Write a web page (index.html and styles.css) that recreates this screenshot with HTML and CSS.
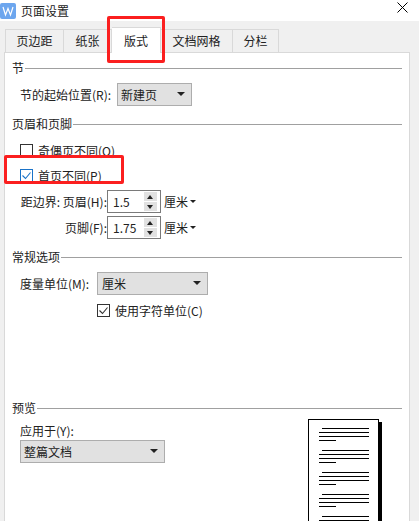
FILE: index.html
```html
<!DOCTYPE html>
<html>
<head>
<meta charset="UTF-8">
<title>页面设置</title>
<link rel="stylesheet" href="styles.css">
</head>
<body>
	<div class="titlebar">
		<svg class="app-icon" width="16" height="16" viewBox="0 0 16 16">
			<rect width="16" height="16" rx="2" fill="#6da6ee"/>
			<path d="M3 4l2.5 8L8 5.5 10.5 12 13 4" fill="none" stroke="#fff" stroke-width="1.2"/>
		</svg>
		<span class="title-text">页面设置</span>
		<svg class="close-icon" width="11" height="11" viewBox="0 0 11 11">
			<path d="M0.5 0.5l10 10M10.5 0.5l-10 10" stroke="#000" stroke-width="1" fill="none"/>
		</svg>
	</div>
	<div class="dialog">
		<div class="tabs">
			<div class="tab tab-margin">页边距</div>
			<div class="tab tab-paper">纸张</div>
			<div class="tab tab-active">版式</div>
			<div class="tab tab-grid">文档网格</div>
			<div class="tab tab-cols">分栏</div>
		</div>
		<div class="panel">
			<div class="group-head head-first"><span>节</span><i></i></div>
			<div class="row row-section">
				<label class="label">节的起始位置(R):</label>
				<div class="select select-section">新建页<b class="arrow"></b></div>
			</div>

			<div class="group-head head-header"><span>页眉和页脚</span><i></i></div>
			<div class="check-row check-odd"><span class="check"></span>奇偶页不同(O)</div>
			<div class="check-row check-first"><span class="check check-blue">
				<svg width="13" height="13" viewBox="0 0 13 13"><path d="M2.5 6.5l3 3 5-6" fill="none" stroke="#1a73c8" stroke-width="1.1"/></svg>
			</span>首页不同(P)</div>
			<div class="row row-spin">
				<label class="label label-spin">距边界: 页眉(H):</label>
				<div class="spin"><span>1.5</span><div class="spin-btns"><b class="up"></b><b class="down"></b></div></div>
				<span class="unit">厘米<b class="unit-arrow"></b></span>
			</div>
			<div class="row row-spin row-spin2">
				<label class="label label-spin">页脚(F):</label>
				<div class="spin"><span>1.75</span><div class="spin-btns"><b class="up"></b><b class="down"></b></div></div>
				<span class="unit">厘米<b class="unit-arrow"></b></span>
			</div>

			<div class="group-head head-general"><span>常规选项</span><i></i></div>
			<div class="row row-measure">
				<label class="label">度量单位(M):</label>
				<div class="select select-measure">厘米<b class="arrow"></b></div>
			</div>
			<div class="check-row check-char"><span class="check">
				<svg width="13" height="13" viewBox="0 0 13 13"><path d="M2.5 6.5l3 3 5-6" fill="none" stroke="#333" stroke-width="1.1"/></svg>
			</span>使用字符单位(C)</div>

			<div class="group-head head-preview"><span>预览</span><i></i></div>
			<div class="preview">
				<div class="apply">
					<label class="label apply-label">应用于(Y):</label>
					<div class="select select-apply">整篇文档<b class="arrow"></b></div>
				</div>
				<div class="page">
					<p class="para"><i></i><i></i><i></i><i></i></p>
					<p class="para"><i></i><i></i><i></i><i></i></p>
					<p class="para"><i></i><i></i><i></i><i></i></p>
					<p class="para"><i></i><i></i><i></i><i></i></p>
					<p class="para"><i></i><i></i></p>
				</div>
			</div>
		</div>
	</div>
	<div class="mark mark-tab"></div>
	<div class="mark mark-check"></div>
</body>
</html>
```

FILE: styles.css
```css
html, body {
	margin: 0;
	padding: 0;
	height: 100%;
	overflow: hidden;
}

body {
	position: relative;
	font-family: "Noto Sans CJK SC", "Liberation Sans", sans-serif;
	font-size: 12px;
	color: #222;
	background-color: #f0f0f0;
}

.titlebar {
	display: flex;
	align-items: center;
	height: 21px;
	background-color: #fff;
}

.app-icon {
	margin-left: 0;
}

.title-text {
	margin-left: 5px;
	font-size: 12px;
}

.close-icon {
	margin-left: auto;
	margin-right: 11px;
	margin-bottom: 6px;
}

.dialog {
	padding: 7px 9px 0 4px;
}

.tabs {
	display: flex;
	height: 24px;
	align-items: flex-end;
	padding-left: 1px;
}

.tab {
	box-sizing: border-box;
	height: 23px;
	line-height: 22px;
	text-align: center;
	border: 1px solid #d9d9d9;
	border-bottom: none;
	border-left: none;
	background-color: #f0f0f0;
}

.tab-margin {
	width: 59px;
	border-left: 1px solid #d9d9d9;
}

.tab-paper {
	width: 48px;
}

.tab-active {
	width: 49px;
	height: 26px;
	margin-bottom: -1px;
	line-height: 26px;
	background-color: #fff;
	position: relative;
}

.tab-grid {
	width: 72px;
}

.tab-cols {
	width: 46px;
}

.panel {
	box-sizing: border-box;
	height: 480px;
	padding: 0 7px 0 7px;
	background-color: #fff;
	border: 1px solid #d9d9d9;
}

.group-head {
	display: flex;
	align-items: center;
	height: 18px;
	line-height: 18px;
}

.group-head i {
	flex: 1;
	height: 1px;
	margin-left: 1px;
	background-color: #a0a0a0;
}

.head-first {
	margin-top: 6px;
}

.head-header {
	margin-top: 9px;
}

.head-general {
	margin-top: 9px;
}

.head-preview {
	margin-top: 81px;
}

.row {
	display: flex;
	align-items: center;
	padding-left: 8px;
}

.row-section {
	margin-top: 6px;
}

.row-section .label {
	width: 97px;
}

.select {
	position: relative;
	box-sizing: border-box;
	height: 23px;
	line-height: 21px;
	padding-left: 3px;
	background-color: #e1e1e1;
	border: 1px solid #adadad;
}

.select-section {
	width: 75px;
}

.select-measure {
	width: 111px;
	padding-left: 4px;
}

.select-apply {
	width: 145px;
}

.arrow {
	position: absolute;
	right: 6px;
	top: 8px;
	border-left: 4px solid transparent;
	border-right: 4px solid transparent;
	border-top: 4px solid #222;
}

.check-row {
	display: flex;
	align-items: center;
	height: 16px;
	padding-left: 8px;
}

.check {
	box-sizing: border-box;
	display: block;
	width: 13px;
	height: 13px;
	margin-right: 5px;
	background-color: #fff;
	border: 1px solid #333;
}

.check svg {
	display: block;
	margin: -1px;
}

.check-blue {
	border-color: #1a73c8;
}

.check-odd {
	margin-top: 9px;
}

.check-first {
	margin-top: 9px;
}

.check-char {
	margin-top: 7px;
	padding-left: 85px;
}

.row-spin {
	margin-top: 7px;
}

.row-spin2 {
	margin-top: 3px;
}

.label-spin {
	width: 87px;
	text-align: right;
	white-space: nowrap;
}

.spin {
	box-sizing: border-box;
	display: flex;
	width: 54px;
	height: 23px;
	line-height: 21px;
	padding-left: 5px;
	justify-content: space-between;
	background-color: #fff;
	border: 1px solid #7a7a7a;
}

.spin-btns {
	display: flex;
	flex-direction: column;
	gap: 1px;
	width: 13px;
	margin: 1px 3px 1px 0;
}

.spin-btns b {
	position: relative;
	flex: 1;
	background-color: #e1e1e1;
}

.up::after, .down::after {
	content: "";
	position: absolute;
	left: 3px;
	top: 3px;
	border-left: 3.5px solid transparent;
	border-right: 3.5px solid transparent;
}

.up::after {
	border-bottom: 4px solid #222;
}

.down::after {
	border-top: 4px solid #222;
}

.unit {
	display: flex;
	align-items: center;
	margin-left: 3px;
}

.unit-arrow {
	margin-left: 2px;
	border-left: 3px solid transparent;
	border-right: 3px solid transparent;
	border-top: 3px solid #222;
}

.row-measure {
	margin-top: 6px;
}

.row-measure .label {
	width: 77px;
}

.preview {
	display: flex;
	justify-content: space-between;
	padding-left: 8px;
}

.apply-label {
	display: block;
	margin-top: 5px;
	line-height: 18px;
}

.page {
	box-sizing: border-box;
	width: 71px;
	height: 110px;
	margin: 2px 23px 0 0;
	padding: 8px 9px 0 10px;
	background-color: #fff;
	border: 1px solid #000;
	box-shadow: 3px 3px 0 #000;
}

.para {
	margin: 0 0 9px 0;
}

.para i {
	display: block;
	height: 1px;
	margin-bottom: 3px;
	background-color: #000;
}

.para i:first-child {
	margin-left: 3px;
}

.para i:nth-child(4) {
	width: 17px;
}

.mark {
	position: absolute;
	box-sizing: border-box;
	border: 3px solid #fb1f1f;
	border-radius: 2px;
}

.mark-tab {
	left: 107px;
	top: 16px;
	width: 58px;
	height: 47px;
}

.mark-check {
	left: 4px;
	top: 155px;
	width: 120px;
	height: 29px;
}
```
